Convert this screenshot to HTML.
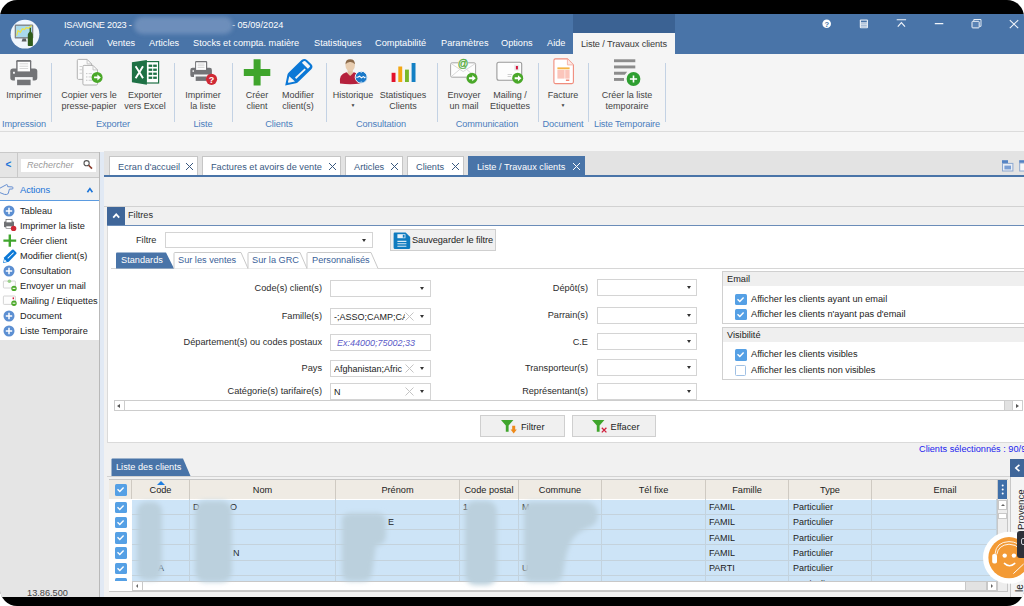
<!DOCTYPE html>
<html lang="fr">
<head>
<meta charset="utf-8">
<title>ISAVIGNE 2023 - Liste / Travaux clients</title>
<style>
html,body{margin:0;padding:0;background:#fff;}
body{width:1024px;height:606px;overflow:hidden;position:relative;font-family:"Liberation Sans",sans-serif;font-size:9.5px;color:#3a3a3a;line-height:11px;}
*{box-sizing:border-box;}
.abs{position:absolute;}
#frame{position:absolute;left:0;top:0;width:1024px;height:606px;background:#000;border-radius:17px;overflow:hidden;}
#app{position:absolute;left:0;top:14px;width:1024px;height:583px;background:#f1f1f1;overflow:hidden;}
/* header */
#hdr{position:absolute;left:0;top:0;width:1024px;height:40px;background:#4974a8;}
#hdr .t{position:absolute;color:#fff;white-space:nowrap;}
#title{left:64px;top:6px;font-size:9.2px;}
.menu{top:24px;font-size:9.2px;}
#acttabtop{position:absolute;left:573px;top:0;width:102px;height:19px;background:#3b6293;}
#acttab{position:absolute;left:573px;top:19px;width:102px;height:21px;background:#f5f5f5;color:#3a3a3a;text-align:center;padding-top:6px;letter-spacing:-0.1px;font-size:9.2px;}
/* ribbon */
#ribbon{position:absolute;left:0;top:40px;width:1024px;height:78px;background:#f5f5f5;border-bottom:1px solid #dcdcdc;}
.rb{position:absolute;text-align:center;white-space:nowrap;color:#444;transform:translateX(-50%);line-height:11px;top:35.5px;font-size:9px;}
.gl{position:absolute;top:65px;letter-spacing:-0.1px;color:#4a7dbd;white-space:nowrap;transform:translateX(-50%);font-size:9.2px;}
.sep{position:absolute;top:9px;width:1px;height:59px;background:#c3d2e4;}
.ico{position:absolute;}
/* below ribbon */
#gap{position:absolute;left:0;top:118px;width:1024px;height:20px;background:#f6f6f6;}

/* sidebar */
#side{position:absolute;left:0;top:138px;width:100px;height:445px;background:#e5e5e5;border-right:1px solid #b9b9b9;}
#srow{position:absolute;left:0;top:0;width:99px;height:26px;border-top:1px solid #c9c9c9;border-bottom:1px solid #c9c9c9;background:#e5e5e5;}
#sback{position:absolute;left:0;top:0;width:18px;height:24px;border-right:1px solid #c9c9c9;color:#1a73d8;font-weight:bold;font-size:10px;text-align:center;padding-top:6px;}
#sbox{position:absolute;left:21px;top:6px;width:75px;height:13px;background:#fff;color:#9a9a9a;font-style:italic;font-size:9px;padding:1px 0 0 6px;}
#sact{position:absolute;left:0;top:26px;width:99px;height:23px;background:#f0f0f0;border-bottom:1px solid #5b9be0;color:#1a73d8;}
#slist{position:absolute;left:0;top:49px;width:99px;height:139px;background:#fff;}
.si{position:absolute;left:20px;white-space:nowrap;color:#222;font-size:9.2px;}
#ver{position:absolute;left:-2px;top:436px;width:99px;text-align:center;color:#444;font-size:9.2px;}
#split{position:absolute;left:100px;top:138px;width:4px;height:445px;background:#e1e9f4;}
/* main */
#main{position:absolute;left:104px;top:137px;width:920px;height:446px;background:#f1f1f1;}
#tabs{position:absolute;left:0;top:0;width:920px;height:24px;background:#e3e3e3;}
#tabline{position:absolute;left:0;top:24px;width:920px;height:2px;background:#4974a8;}
.tab{position:absolute;top:5px;height:19px;background:#fff;border:1px solid #c6c6c6;border-bottom:none;color:#39587f;font-size:9.2px;padding:5px 0 0 8px;white-space:nowrap;}
.tab.on{background:#4974a8;border-color:#4974a8;color:#fff;}
.tab svg{position:absolute;right:3px;top:4.5px;}

/* target-coord layer */
#tc{position:absolute;left:0;top:-14px;width:1024px;height:606px;}
#tc div,#tc span,#tc svg{position:absolute;}
.ln{background:#d2d2d2;}
.lbl{white-space:nowrap;color:#2c2c2c;font-size:9.2px;text-align:right;}
.inp{background:#fff;border:1px solid #d4d4d4;height:17px;font-size:9px;color:#222;white-space:nowrap;overflow:hidden;padding:3px 0 0 3px;}
.arr{width:0;height:0;border-left:2.5px solid transparent;border-right:2.5px solid transparent;border-top:3px solid #333;}
.btn{background:#f0f0f0;border:1px solid #cfcfcf;font-size:9.2px;color:#222;white-space:nowrap;}
.gb{border:1px solid #d0d0d0;background:#fff;}
.gbh{background:#efefef;left:0;top:0;height:14px;width:400px;font-size:9.2px;color:#222;padding:2px 0 0 4px;}
.cb{width:11.5px;height:11.5px;background:#55a0e5;border-radius:1.5px;}
.cb0{width:11px;height:11px;background:#fff;border:1px solid #9fc0e4;border-radius:1.5px;}
.ct{font-size:9.2px;color:#222;white-space:nowrap;}
.th{top:480px;height:19px;background:#efebe4;border-right:1px solid #cfcac2;font-size:9.2px;color:#222;text-align:center;padding-top:5px;}
.row{left:109px;width:888px;height:15.3px;background:#cde4f7;border-bottom:1px solid #c4d2dc;}
.cell{font-size:9px;color:#222;white-space:nowrap;}
.vl{width:1px;background:#c3d3df;top:499px;height:83px;}
.blur{background:#b7ccd9;filter:blur(3px);border-radius:10px;}
</style>
</head>
<body>
<div id="frame">
<div id="app">

<!-- HEADER -->
<div id="hdr">
  <div id="acttabtop"></div>
  <div class="t" id="title"><span style="letter-spacing:-0.25px">ISAVIGNE 2023 - </span><span style="display:inline-block;width:98px"></span>- 05/09/2024</div>
  <div class="t menu" style="left:64px">Accueil</div>
  <div class="t menu" style="left:107px">Ventes</div>
  <div class="t menu" style="left:149px">Articles</div>
  <div class="t menu" style="left:193px">Stocks et compta. matière</div>
  <div class="t menu" style="left:314px">Statistiques</div>
  <div class="t menu" style="left:375px">Comptabilité</div>
  <div class="t menu" style="left:441px">Paramètres</div>
  <div class="t menu" style="left:501px">Options</div>
  <div class="t menu" style="left:547px">Aide</div>
  <div id="acttab">Liste / Travaux clients</div>
</div>

<!-- RIBBON -->
<div id="ribbon">
  <div class="rb" style="left:24px">Imprimer</div>
  <div class="rb" style="left:89px">Copier vers le<br>presse-papier</div>
  <div class="rb" style="left:145px">Exporter<br>vers Excel</div>
  <div class="rb" style="left:203px">Imprimer<br>la liste</div>
  <div class="rb" style="left:257px">Créer<br>client</div>
  <div class="rb" style="left:298px">Modifier<br>client(s)</div>
  <div class="rb" style="left:353px">Historique<br><span style="font-size:5px;position:relative;top:-2px">&#9660;</span></div>
  <div class="rb" style="left:403px">Statistiques<br>Clients</div>
  <div class="rb" style="left:464px">Envoyer<br>un mail</div>
  <div class="rb" style="left:510px">Mailing /<br>Etiquettes</div>
  <div class="rb" style="left:563px">Facture<br><span style="font-size:5px;position:relative;top:-2px">&#9660;</span></div>
  <div class="rb" style="left:627px">Créer la liste<br>temporaire</div>

  <div class="gl" style="left:24px">Impression</div>
  <div class="gl" style="left:113px">Exporter</div>
  <div class="gl" style="left:203px">Liste</div>
  <div class="gl" style="left:279px">Clients</div>
  <div class="gl" style="left:381px">Consultation</div>
  <div class="gl" style="left:487px">Communication</div>
  <div class="gl" style="left:563px">Document</div>
  <div class="gl" style="left:627px">Liste Temporaire</div>

  <div class="sep" style="left:51px"></div>
  <div class="sep" style="left:174px"></div>
  <div class="sep" style="left:232px"></div>
  <div class="sep" style="left:326px"></div>
  <div class="sep" style="left:437px"></div>
  <div class="sep" style="left:538px"></div>
  <div class="sep" style="left:588px"></div>
  <div class="sep" style="left:665px"></div>
</div>
<div id="gap"></div>

<!-- SIDEBAR -->
<div id="side">
  <div id="srow"><div id="sback">&lt;</div><div id="sbox">Rechercher</div></div>
  <div id="sact"><span class="abs" style="left:20px;top:6px;font-size:9.4px;letter-spacing:-0.1px">Actions</span></div>
  <div id="slist">
    <div class="si" style="top:5px">Tableau</div>
    <div class="si" style="top:20px">Imprimer la liste</div>
    <div class="si" style="top:35px">Créer client</div>
    <div class="si" style="top:50px">Modifier client(s)</div>
    <div class="si" style="top:65px">Consultation</div>
    <div class="si" style="top:80px">Envoyer un mail</div>
    <div class="si" style="top:95px">Mailing / Etiquettes</div>
    <div class="si" style="top:110px">Document</div>
    <div class="si" style="top:125px">Liste Temporaire</div>
  </div>
  <div id="ver">13.86.500</div>
</div>
<div id="split"></div>

<!-- MAIN -->
<div id="main">
  <div id="tabs">
    <div class="tab" style="left:5px;width:89px">Ecran d'accueil <svg width="9" height="9" viewBox="0 0 9 9"><path d="M1 1L8 8M8 1L1 8" stroke="#39587f" stroke-width="1" fill="none"/></svg></div>
    <div class="tab" style="left:98px;width:139px">Factures et avoirs de vente <svg width="9" height="9" viewBox="0 0 9 9"><path d="M1 1L8 8M8 1L1 8" stroke="#39587f" stroke-width="1" fill="none"/></svg></div>
    <div class="tab" style="left:241px;width:58px">Articles <svg width="9" height="9" viewBox="0 0 9 9"><path d="M1 1L8 8M8 1L1 8" stroke="#39587f" stroke-width="1" fill="none"/></svg></div>
    <div class="tab" style="left:303px;width:57px">Clients <svg width="9" height="9" viewBox="0 0 9 9"><path d="M1 1L8 8M8 1L1 8" stroke="#39587f" stroke-width="1" fill="none"/></svg></div>
    <div class="tab on" style="left:364px;width:117px">Liste / Travaux clients <svg width="9" height="9" viewBox="0 0 9 9"><path d="M1 1L8 8M8 1L1 8" stroke="#fff" stroke-width="1" fill="none"/></svg></div>
  </div>
  <div id="tabline"></div>
</div>
<div id="tc">
<!--LOGO-->
<svg width="32" height="32" viewBox="9 18 32 32" style="left:9px;top:18px">
<circle cx="25" cy="34.2" r="14.4" fill="#f0f6fd"/>
<rect x="14.7" y="24.6" width="18.6" height="14" rx="1.2" fill="#80858a"/>
<rect x="16" y="25.9" width="16" height="11.2" fill="#a9d9ec"/>
<path d="M16.6 35.6L18 30.6L20.4 32.4L22.4 28.8L24.6 29.6L26.2 27.6L28.4 28.2L31.6 25.6" stroke="#ebe24a" stroke-width="1.3" fill="none"/>
<path d="M22.6 38.6H25.8L26.6 41.6H21.6Z" fill="#5c5f62"/>
<path d="M29.6 27.8H31V31.6Q32.9 33.4 32.9 36V45.2Q32.9 46 32.1 46H28.6Q27.8 46 27.8 45.2V36Q27.8 33.4 29.6 31.6Z" fill="#2f5c1c"/>
</svg>
<!--/LOGO-->
<!--WINCTL-->
<svg width="214" height="26" viewBox="810 14 214 26" style="left:810px;top:14px">
<circle cx="826.7" cy="23.8" r="4.3" fill="#fff"/><text x="826.7" y="26.6" font-size="7.6" font-weight="bold" fill="#4974a8" text-anchor="middle" font-family="Liberation Sans, sans-serif">?</text>
<rect x="859.8" y="19.4" width="8.2" height="8.9" rx="1" fill="#e4ebf4"/><rect x="861" y="20.6" width="5.8" height="1.7" fill="#4974a8"/><path d="M861 23.8H866.8M861 25.4H866.8M861 27H866.8" stroke="#8fa9c9" stroke-width="0.8"/>
<path d="M896.7 19.8H906.1" stroke="#f0f4fa" stroke-width="1.1"/><path d="M897.8 26.6L901.4 22.6L905 26.6" stroke="#f0f4fa" stroke-width="1.2" fill="none"/>
<path d="M934.8 23.6H943.3" stroke="#f0f4fa" stroke-width="1.2"/>
<path d="M973.8 21.2V19.5H981V26.3H979.4" stroke="#e4ebf4" stroke-width="1" fill="none"/><rect x="972" y="21.3" width="7.2" height="6.6" rx="0.8" stroke="#f0f4fa" stroke-width="1" fill="#5a83b5"/>
<path d="M1009.8 20.1L1018.2 28.1M1018.2 20.1L1009.8 28.1" stroke="#f0f4fa" stroke-width="1.1"/>
</svg>
<div style="left:134px;top:17px;width:99px;height:17px;background:#7292bd;filter:blur(2px);border-radius:9px;opacity:.9"></div>
<!--/WINCTL-->
<!--SIDEICONS-->
<svg width="99" height="200" viewBox="0 150 99 200" style="left:0;top:150px">
<path d="M-0.5 188.4L6.4 184.7Q7.3 184.3 7.5 185.3L7.7 186.7L12.1 186.9Q13.1 187.1 13.1 188Q13.1 188.9 12.1 189L9.4 189.1L8.4 193Q8 194.4 6.4 194.5L4.4 194.4L-0.5 192.4" stroke="#5f8ad0" stroke-width="0.95" fill="none" stroke-linejoin="round"/>
<path d="M87.4 192.2L89.9 188.6L92.4 192.2" stroke="#1a73d8" stroke-width="1.6" fill="none"/>
<circle cx="86.6" cy="163.2" r="2.6" stroke="#555" stroke-width="1.1" fill="#fff"/><path d="M88.6 165.2L92 168.6" stroke="#8a3a2a" stroke-width="1.6"/>
<circle cx="9" cy="211" r="5.5" fill="#5c8fd2"/><path d="M9 207.8V214.2M5.8 211H12.2" stroke="#fff" stroke-width="1.5"/>
<rect x="4" y="221.6" width="10" height="5.6" rx="0.8" fill="#6f7073"/><rect x="6" y="219.4" width="6" height="3.4" fill="#fff" stroke="#6f7073" stroke-width="0.8"/><rect x="6" y="226" width="6" height="2.6" fill="#fff" stroke="#6f7073" stroke-width="0.6"/><circle cx="13.6" cy="228.4" r="2.7" fill="#cf2a36"/>
<path d="M8.6 234.4H11V239.4H16.2V241.8H11V246.8H8.6V241.8H3.4V239.4H8.6Z" fill="#3fa52c"/>
<g transform="translate(3 249.4) scale(0.5)"><path d="M0.3 27L2.6 15.6L18.2 0.9Q19.8 -0.4 21.4 0.9L26.4 5.9Q27.8 7.5 26.4 9.1L11.6 24.6Z" fill="#0b78d6"/><path d="M8.8 17.4L20.6 5.8L21.8 7L10 18.6Z" fill="#fff"/><path d="M2.9 19.6L7.6 24.2L1.9 25.6Z" fill="#fff"/></g>
<circle cx="9" cy="271" r="5.5" fill="#5c8fd2"/><path d="M9 267.8V274.2M5.8 271H12.2" stroke="#fff" stroke-width="1.5"/>
<rect x="3.4" y="281" width="12" height="7" rx="0.8" fill="#fdfdfd" stroke="#c9c9c9" stroke-width="0.8"/><circle cx="9.4" cy="281.2" r="1.8" fill="#9ad08a"/><circle cx="14" cy="288.4" r="2.7" fill="#4aa829"/><rect x="12.6" y="287.8" width="2.8" height="1.2" fill="#e8f5e2"/>
<rect x="3.4" y="296" width="12" height="8.4" rx="0.8" fill="#fdfdfd" stroke="#c9c9c9" stroke-width="0.8"/><rect x="12.6" y="297.4" width="1.4" height="1.8" fill="#d4143c"/><circle cx="14" cy="303.2" r="2.7" fill="#4aa829"/><rect x="12.6" y="302.6" width="2.8" height="1.2" fill="#e8f5e2"/>
<circle cx="9" cy="316" r="5.5" fill="#5c8fd2"/><path d="M9 312.8V319.2M5.8 316H12.2" stroke="#fff" stroke-width="1.5"/>
<circle cx="9" cy="331" r="5.5" fill="#5c8fd2"/><path d="M9 327.8V334.2M5.8 331H12.2" stroke="#fff" stroke-width="1.5"/>
</svg>
<!--/SIDEICONS-->
<!--RIBICONS-->
<svg width="700" height="40" viewBox="0 54 700 40" style="left:0;top:54px"><rect x="10.3" y="68.6" width="27.0" height="11.8" rx="2.7" fill="#737477"/><rect x="16.2" y="60.0" width="15.1" height="11.3" rx="1.2" fill="#737477"/><rect x="17.6" y="61.8" width="12.4" height="9.6" fill="#fdfdfd"/><rect x="19.5" y="63.5" width="8.6" height="0.7" fill="#c8c8c8"/><rect x="19.5" y="65.8" width="8.6" height="0.7" fill="#c8c8c8"/><rect x="19.5" y="68.1" width="8.6" height="0.7" fill="#c8c8c8"/><rect x="14.9" y="77.1" width="17.8" height="8.1" fill="#f5f6f7"/><rect x="17.1" y="79.7" width="13.5" height="5.5" fill="#737477"/><rect x="13.0" y="71.8" width="1.9" height="1.9" fill="#f5f6f7"/><path d="M78.5 59.4H87.1L91.6 63.9V78.2Q91.6 79.4 90.39999999999999 79.4H78.5Q77.3 79.4 77.3 78.2V60.6Q77.3 59.4 78.5 59.4Z" fill="#fbfbfb" stroke="#a9a9a9" stroke-width="0.9"/><path d="M87.1 59.4V63.9H91.6" fill="none" stroke="#bdbdbd" stroke-width="0.8"/><rect x="79.5" y="66.0" width="2.5" height="0.8" fill="#c5c5c5"/><rect x="79.5" y="69.4" width="2.5" height="0.8" fill="#c5c5c5"/><rect x="79.5" y="72.8" width="2.5" height="0.8" fill="#c5c5c5"/><path d="M84.10000000000001 65.4H93.0L97.5 69.9V83.8Q97.5 85.0 96.3 85.0H84.10000000000001Q82.9 85.0 82.9 83.8V66.60000000000001Q82.9 65.4 84.10000000000001 65.4Z" fill="#fbfbfb" stroke="#a9a9a9" stroke-width="0.9"/><path d="M93.0 65.4V69.9H97.5" fill="none" stroke="#bdbdbd" stroke-width="0.8"/><rect x="86" y="73.2" width="1.4" height="0.9" fill="#bdbdbd"/><rect x="88.6" y="73.2" width="3.5" height="0.9" fill="#c9c9c9"/><rect x="86" y="76.5" width="1.4" height="0.9" fill="#bdbdbd"/><rect x="88.6" y="76.5" width="3.5" height="0.9" fill="#c9c9c9"/><rect x="86" y="79.8" width="1.4" height="0.9" fill="#bdbdbd"/><rect x="88.6" y="79.8" width="3.5" height="0.9" fill="#c9c9c9"/><circle cx="97.1" cy="77.4" r="5.5" fill="#4aa829"/><path d="M94.07 76.47H97.38V74.38L100.84 77.4L97.38 80.43V78.34H94.07Z" fill="#fff"/><rect x="145" y="61.6" width="13.6" height="21.4" fill="#fff" stroke="#1e7145" stroke-width="1.2"/><rect x="148.6" y="64.6" width="3.6" height="2.3" fill="#1e7145"/><rect x="153.2" y="64.6" width="3.6" height="2.3" fill="#1e7145"/><rect x="148.6" y="68.6" width="3.6" height="2.3" fill="#1e7145"/><rect x="153.2" y="68.6" width="3.6" height="2.3" fill="#1e7145"/><rect x="148.6" y="72.6" width="3.6" height="2.3" fill="#1e7145"/><rect x="153.2" y="72.6" width="3.6" height="2.3" fill="#1e7145"/><rect x="148.6" y="76.6" width="3.6" height="2.3" fill="#1e7145"/><rect x="153.2" y="76.6" width="3.6" height="2.3" fill="#1e7145"/><path d="M131.9 62.3L146.9 60V84.7L131.9 82.3Z" fill="#1e7145"/><path d="M135.6 66.3L139.4 72.3L135.6 78.3M143 66.3L139.4 72.3L143 78.3" stroke="#fff" stroke-width="1.9" fill="none"/><rect x="190.3" y="67.7" width="21.6" height="9.4" rx="2.2" fill="#737477"/><rect x="195.1" y="60.9" width="12.1" height="9.0" rx="1.2" fill="#737477"/><rect x="196.1" y="62.3" width="9.9" height="7.6" fill="#fdfdfd"/><rect x="197.6" y="63.7" width="6.9" height="0.7" fill="#c8c8c8"/><rect x="197.6" y="65.5" width="6.9" height="0.7" fill="#c8c8c8"/><rect x="197.6" y="67.3" width="6.9" height="0.7" fill="#c8c8c8"/><rect x="194.0" y="74.5" width="14.3" height="6.4" fill="#f5f6f7"/><rect x="195.7" y="76.5" width="10.8" height="4.4" fill="#737477"/><rect x="192.5" y="70.3" width="1.5" height="1.5" fill="#f5f6f7"/><circle cx="211.5" cy="79.3" r="5.6" fill="#cf2a36"/><text x="211.5" y="82.6" font-size="9" font-weight="bold" fill="#fff" text-anchor="middle" font-family="Liberation Sans, sans-serif">?</text><path d="M253.6 59.3H260.6V68.9H270.3V75.9H260.6V85.5H253.6V75.9H243.8V68.9H253.6Z" fill="#3fa52c"/><path d="M285.2 85.6L287.5 74.6Q287.8 73.4 288.8 72.4L301.6 60.1Q304.4 57.8 307.2 60.2L311.4 64.2Q313.6 66.6 311.3 69.2L298.4 81.8Q297.4 82.8 296 83.3Z" fill="#0b78d6"/><path d="M301.9 62.8L303.6 61.2Q304.5 60.6 305.3 61.3L309.7 65.4Q310.4 66.2 309.7 67L307.9 68.7Z" fill="#f5f5f5"/><path d="M295 77.6L304.6 68.6L305.8 69.8L296.2 79Z" fill="#f5f5f5"/><path d="M289.3 76.3L295 81.5L288.9 82.7Q287.8 82.8 288 81.7Z" fill="#f5f5f5"/><path d="M340 83.4Q338.6 74 346.4 72.2L350.2 74.6L354 72.2Q361.8 74 360.4 83.4Q350.2 85 340 83.4Z" fill="#b5213d"/><path d="M347.6 70H352.8V73.5L350.2 76L347.6 73.5Z" fill="#e3c4a4"/><ellipse cx="350.2" cy="65.6" rx="4.7" ry="5.6" fill="#e8cdb0"/><path d="M345.5 64.5Q345.3 59.3 350.2 59.3Q355.1 59.3 354.9 64.5Q353.5 61.8 350.2 62Q346.9 61.8 345.5 64.5Z" fill="#8a6a4a"/><circle cx="361.2" cy="77.2" r="6" fill="#1a79c9" stroke="#f5f6f7" stroke-width="1"/><path d="M357.2 77.6L359.6 76.2L361.4 77.8L363.4 76.6L365.2 78" stroke="#fff" stroke-width="1.1" fill="none"/><path d="M361.2 71.8V73M361.2 81.4V82.6M355.8 77.2H357M365.4 77.2H366.6" stroke="#fff" stroke-width="0.8"/><rect x="391.6" y="72.8" width="3.9" height="9.2" fill="#e3122c"/><rect x="398.3" y="66.5" width="3.9" height="15.5" fill="#f3a712"/><rect x="405" y="69.6" width="3.9" height="12.4" fill="#78b82a"/><rect x="411.6" y="63" width="3.9" height="19" fill="#1380c4"/><rect x="450.6" y="62.8" width="25" height="14.4" rx="1.6" fill="#fdfdfd" stroke="#a6a6a6" stroke-width="1"/><path d="M451.2 63.6L463.2 71.6L475.2 63.6M451.2 76.6L459.8 69.4M475.2 76.6L466.6 69.4" stroke="#cfcfcf" stroke-width="0.8" fill="none"/><circle cx="463.2" cy="63.9" r="5.2" fill="#f5f5f5"/><text x="463.2" y="67" font-size="10.5" fill="#55ad3e" stroke="#55ad3e" stroke-width="0.35" text-anchor="middle" font-family="Liberation Sans, sans-serif">@</text><circle cx="472" cy="78.2" r="5.5" fill="#4aa829"/><path d="M468.98 77.27H472.27V75.17L475.74 78.2L472.27 81.23V79.14H468.98Z" fill="#fff"/><rect x="496.9" y="62.3" width="24.8" height="18" rx="2" fill="#fdfdfd" stroke="#9a9a9a" stroke-width="1.1"/><rect x="514.2" y="64.6" width="5.2" height="6" fill="#e9e9e9"/><rect x="515.9" y="66" width="2" height="3.4" fill="#d4143c"/><rect x="507.6" y="74" width="4.4" height="0.8" fill="#c4c4c4"/><rect x="507.6" y="76" width="3.4" height="0.8" fill="#c4c4c4"/><circle cx="517.7" cy="78.2" r="5.5" fill="#4aa829"/><path d="M514.68 77.27H517.98V75.17L521.44 78.2L517.98 81.23V79.14H514.68Z" fill="#fff"/><path d="M555.4 58.9H567.4L573.4 64.9V82Q573.4 83.6 571.8 83.6H555.4Q553.9 83.6 553.9 82V60.4Q553.9 58.9 555.4 58.9Z" fill="#fff" stroke="#f08c7c" stroke-width="1.1"/><path d="M567.4 58.9V64.9H573.4" fill="#fde9e5" stroke="#f4a89c" stroke-width="0.8"/><rect x="557.4" y="67.4" width="12.2" height="1.9" fill="#f6b445"/><rect x="557.4" y="70" width="7.2" height="8.6" fill="#fbc5bb"/><rect x="565.2" y="70" width="4.4" height="8.6" fill="#fbc5bb"/><rect x="565.9" y="79.6" width="3.4" height="1.2" fill="#ee6a55"/><rect x="614" y="59.3" width="21.3" height="2.9" fill="#8c8c8c"/><rect x="614" y="65.5" width="21.3" height="2.9" fill="#8c8c8c"/><path d="M614 71.8H627.2L624.8 74.7H614Z" fill="#8c8c8c"/><rect x="614" y="78" width="10" height="2.9" fill="#8c8c8c"/><circle cx="633.5" cy="79" r="6.9" fill="#2e9f31"/><path d="M633.5 75.4V82.6M629.9 79H637.1" stroke="#fff" stroke-width="1.6"/></svg>
<!--/RIBICONS-->
<div class="ln" style="left:104px;top:206px;width:920px;height:1px"></div>
<div style="left:107px;top:207px;width:917px;height:18px;background:#f0f0f0"></div>
<div style="left:107px;top:207px;width:18px;height:18px;background:#3f6699"><svg width="18" height="18" viewBox="0 0 18 18" style="left:0;top:0"><path d="M6.2 10.6L9.2 7.4L12.2 10.6" stroke="#fff" stroke-width="1.8" fill="none"/></svg></div>
<div class="lbl" style="left:128px;top:210px;text-align:left">Filtres</div>
<div style="left:107px;top:225px;width:917px;height:1px;background:#6a8cb8"></div>
<div style="left:107px;top:226px;width:930px;height:217px;background:#fff;border:1px solid #dadada;border-top:none"></div>
<div class="lbl" style="left:136px;top:235px;text-align:left">Filtre</div>
<div class="inp" style="left:165px;top:232px;width:208px;height:16px"></div><div class="arr" style="left:362px;top:239px"></div>
<div class="btn" style="left:389.5px;top:229px;width:106.5px;height:21.5px"><svg width="18" height="18" viewBox="0 0 18 18" style="left:2px;top:1.5px"><path d="M1.6 0.6H12.6L17.2 5V15.8Q17.2 16.9 16.1 16.9H1.6Q0.6 16.9 0.6 15.8V1.7Q0.6 0.6 1.6 0.6Z" fill="#0f7bbf"/><rect x="4.4" y="2.2" width="8" height="4" fill="#e9f3fa"/><rect x="9.8" y="2.8" width="1.8" height="2.8" fill="#0f7bbf"/><path d="M4.4 9.4H13.4M4.4 11.8H13.4M4.4 14.2H13.4" stroke="#d7eaf6" stroke-width="1.1"/></svg><span style="left:21.5px;top:5px;letter-spacing:-0.05px">Sauvegarder le filtre</span></div>
<div style="left:111px;top:268px;width:913px;height:1px;background:#d6d6d6"></div>
<svg width="270" height="17" viewBox="0 0 270 17" style="left:116px;top:252px"><path d="M0 16.5V1.5Q0 0.5 1 0.5H50L58 16.5Z" fill="#4974a8"/><path d="M58 16.5V1.5Q58 0.5 59 0.5H125L132 16.5" fill="#fff" stroke="#c9c9c9"/><path d="M132 16.5V1.5Q132 0.5 133 0.5H184L191 16.5" fill="#fff" stroke="#c9c9c9"/><path d="M191 16.5V1.5Q191 0.5 192 0.5H255L262 16.5" fill="#fff" stroke="#c9c9c9"/></svg>
<div class="lbl" style="left:121px;top:255px;color:#fff">Standards</div>
<div class="lbl" style="left:178px;top:255px;color:#3b5f99">Sur les ventes</div>
<div class="lbl" style="left:252px;top:255px;color:#3b5f99">Sur la GRC</div>
<div class="lbl" style="left:312px;top:255px;color:#3b5f99">Personnalisés</div>
<div class="lbl" style="left:122px;width:200px;top:282.5px">Code(s) client(s)</div>
<div class="inp" style="left:330px;top:279.5px;width:101px"><span style="left:3px;top:3px;width:71px;overflow:hidden"></span></div>
<div class="arr" style="left:420px;top:286.5px"></div>
<div class="lbl" style="left:122px;width:200px;top:310.5px">Famille(s)</div>
<div class="inp" style="left:330px;top:307.5px;width:101px"><span style="left:3px;top:3px;width:71px;overflow:hidden">-;ASSO;CAMP;CA</span></div>
<div class="arr" style="left:420px;top:314.5px"></div>
<svg width="9" height="9" viewBox="0 0 9 9" style="left:405px;top:311.5px"><path d="M0.5 0.5L8.5 8.5M8.5 0.5L0.5 8.5" stroke="#c4c4c4" stroke-width="1" fill="none"/></svg>
<div class="lbl" style="left:122px;width:200px;top:336.5px">Département(s) ou codes postaux</div>
<div class="inp" style="left:330px;top:333.5px;width:101px;color:#5a5ac8;font-style:italic;padding-left:6px">Ex:44000;75002;33</div>
<div class="lbl" style="left:122px;width:200px;top:362.5px">Pays</div>
<div class="inp" style="left:330px;top:359.5px;width:101px"><span style="left:3px;top:3px;width:71px;overflow:hidden">Afghanistan;Afric</span></div>
<div class="arr" style="left:420px;top:366.5px"></div>
<svg width="9" height="9" viewBox="0 0 9 9" style="left:405px;top:363.5px"><path d="M0.5 0.5L8.5 8.5M8.5 0.5L0.5 8.5" stroke="#c4c4c4" stroke-width="1" fill="none"/></svg>
<div class="lbl" style="left:122px;width:200px;top:386.0px">Catégorie(s) tarifaire(s)</div>
<div class="inp" style="left:330px;top:383.0px;width:101px"><span style="left:3px;top:3px;width:71px;overflow:hidden">N</span></div>
<div class="arr" style="left:420px;top:390.0px"></div>
<svg width="9" height="9" viewBox="0 0 9 9" style="left:405px;top:387.0px"><path d="M0.5 0.5L8.5 8.5M8.5 0.5L0.5 8.5" stroke="#c4c4c4" stroke-width="1" fill="none"/></svg>
<div class="lbl" style="left:388px;width:200px;top:282.8px">Dépôt(s)</div>
<div class="inp" style="left:597px;top:279.0px;width:100px"></div><div class="arr" style="left:687px;top:286.0px"></div>
<div class="lbl" style="left:388px;width:200px;top:310.3px">Parrain(s)</div>
<div class="inp" style="left:597px;top:306.5px;width:100px"></div><div class="arr" style="left:687px;top:313.5px"></div>
<div class="lbl" style="left:388px;width:200px;top:336.8px">C.E</div>
<div class="inp" style="left:597px;top:333.0px;width:100px"></div><div class="arr" style="left:687px;top:340.0px"></div>
<div class="lbl" style="left:388px;width:200px;top:362.8px">Transporteur(s)</div>
<div class="inp" style="left:597px;top:359.0px;width:100px"></div><div class="arr" style="left:687px;top:366.0px"></div>
<div class="lbl" style="left:388px;width:200px;top:386.3px">Représentant(s)</div>
<div class="inp" style="left:597px;top:382.5px;width:100px"></div><div class="arr" style="left:687px;top:389.5px"></div>
<div class="gb" style="left:722px;top:271px;width:310px;height:53px"><div class="gbh">Email</div></div>
<div class="cb" style="left:735px;top:293.5px"><svg width="11" height="11" viewBox="0 0 11 11" style="left:0;top:0"><path d="M2.5 5.2L4.8 7.4L8.6 3.4" stroke="#fff" stroke-width="1.4" fill="none"/></svg></div>
<div class="ct" style="left:751px;top:293.5px">Afficher les clients ayant un email</div>
<div class="cb" style="left:735px;top:308.5px"><svg width="11" height="11" viewBox="0 0 11 11" style="left:0;top:0"><path d="M2.5 5.2L4.8 7.4L8.6 3.4" stroke="#fff" stroke-width="1.4" fill="none"/></svg></div>
<div class="ct" style="left:751px;top:308.5px">Afficher les clients n'ayant pas d'email</div>
<div class="gb" style="left:722px;top:327px;width:310px;height:53px"><div class="gbh">Visibilité</div></div>
<div class="cb" style="left:735px;top:349px"><svg width="11" height="11" viewBox="0 0 11 11" style="left:0;top:0"><path d="M2.5 5.2L4.8 7.4L8.6 3.4" stroke="#fff" stroke-width="1.4" fill="none"/></svg></div>
<div class="ct" style="left:751px;top:349px">Afficher les clients visibles</div>
<div class="cb0" style="left:735px;top:364.5px"></div>
<div class="ct" style="left:751px;top:364.5px">Afficher les clients non visibles</div>
<div style="left:114px;top:400px;width:908px;height:11px;background:#e2e2e2;border:1px solid #cdcdcd"></div>
<div style="left:114px;top:400px;width:10.5px;height:11px;background:#fff;border:1px solid #cdcdcd"></div><div style="left:117px;top:403.5px;width:0;height:0;border-top:2px solid transparent;border-bottom:2px solid transparent;border-right:3px solid #555"></div>
<div style="left:124px;top:400px;width:881px;height:11px;background:#fff;border:1px solid #cdcdcd"></div>
<div style="left:1012px;top:400px;width:10.5px;height:11px;background:#fff;border:1px solid #cdcdcd"></div><div style="left:1016px;top:403.5px;width:0;height:0;border-top:2px solid transparent;border-bottom:2px solid transparent;border-left:3px solid #555"></div>
<div class="btn" style="left:480px;top:415px;width:85px;height:22px"><svg width="20" height="16" viewBox="0 0 20 16" style="left:20px;top:3.8px"><path d="M0 0H12.4L7.6 5.6V11.8H4.8V5.6Z" fill="#3fa52c"/><path d="M11.2 5.8H14.2V9.6H15.8L12.7 13.4L9.6 9.6H11.2Z" fill="#ee8a1a"/></svg><span style="left:40px;top:5.5px">Filtrer</span></div>
<div class="btn" style="left:572px;top:415px;width:84px;height:22px"><svg width="20" height="16" viewBox="0 0 20 16" style="left:18.6px;top:3.8px"><path d="M0 0H12.4L7.6 5.6V11.8H4.8V5.6Z" fill="#3fa52c"/><path d="M9.8 7.8L14.4 12.4M14.4 7.8L9.8 12.4" stroke="#d01f3c" stroke-width="1.3"/></svg><span style="left:37.5px;top:5.5px">Effacer</span></div>
<div class="ct" style="left:919px;top:444px;color:#2222ee">Clients sélectionnés : 90/9</div>
<svg width="90" height="18" viewBox="0 0 90 18" style="left:111px;top:458px"><path d="M0.5 18V1.5Q0.5 0.5 1.5 0.5H72L79.5 18Z" fill="#4974a8"/></svg>
<div class="lbl" style="left:116px;top:462px;color:#fff">Liste des clients</div>
<div class="ln" style="left:107px;top:476px;width:903px;height:1px"></div>
<div style="left:108.5px;top:479px;width:899px;height:113px;background:#fff;border:1px solid #c6c6c6"></div>
<div class="th" style="left:109px;width:23px"></div>
<div class="th" style="left:132px;width:58px">Code</div>
<div class="th" style="left:190px;width:146px">Nom</div>
<div class="th" style="left:336px;width:124px">Prénom</div>
<div class="th" style="left:460px;width:59px">Code postal</div>
<div class="th" style="left:519px;width:83px">Commune</div>
<div class="th" style="left:602px;width:104px">Tél fixe</div>
<div class="th" style="left:706px;width:83px">Famille</div>
<div class="th" style="left:789px;width:83px">Type</div>
<div class="th" style="left:872px;width:146px;border-right:none">Email</div>
<div class="cb" style="left:115px;top:484px"><svg width="11" height="11" viewBox="0 0 11 11" style="left:0;top:0"><path d="M2.5 5.2L4.8 7.4L8.6 3.4" stroke="#fff" stroke-width="1.4" fill="none"/></svg></div>
<div style="left:156.5px;top:481px;width:0;height:0;border-left:4px solid transparent;border-right:4px solid transparent;border-bottom:4px solid #1f7ee0"></div>
<div style="left:109px;top:499px;width:889px;height:83px;overflow:hidden">
<div class="row" style="left:0;top:0.5px"></div>
<div class="cb" style="left:6px;top:2.5px"><svg width="11" height="11" viewBox="0 0 11 11" style="left:0;top:0"><path d="M2.5 5.2L4.8 7.4L8.6 3.4" stroke="#fff" stroke-width="1.4" fill="none"/></svg></div>
<div class="cell" style="left:600px;top:3.0px">FAMIL</div>
<div class="cell" style="left:684px;top:3.0px">Particulier</div>
<div class="row" style="left:0;top:15.799999999999955px"></div>
<div class="cb" style="left:6px;top:17.799999999999955px"><svg width="11" height="11" viewBox="0 0 11 11" style="left:0;top:0"><path d="M2.5 5.2L4.8 7.4L8.6 3.4" stroke="#fff" stroke-width="1.4" fill="none"/></svg></div>
<div class="cell" style="left:600px;top:18.299999999999955px">FAMIL</div>
<div class="cell" style="left:684px;top:18.299999999999955px">Particulier</div>
<div class="row" style="left:0;top:31.100000000000023px"></div>
<div class="cb" style="left:6px;top:33.10000000000002px"><svg width="11" height="11" viewBox="0 0 11 11" style="left:0;top:0"><path d="M2.5 5.2L4.8 7.4L8.6 3.4" stroke="#fff" stroke-width="1.4" fill="none"/></svg></div>
<div class="cell" style="left:600px;top:33.60000000000002px">FAMIL</div>
<div class="cell" style="left:684px;top:33.60000000000002px">Particulier</div>
<div class="row" style="left:0;top:46.39999999999998px"></div>
<div class="cb" style="left:6px;top:48.39999999999998px"><svg width="11" height="11" viewBox="0 0 11 11" style="left:0;top:0"><path d="M2.5 5.2L4.8 7.4L8.6 3.4" stroke="#fff" stroke-width="1.4" fill="none"/></svg></div>
<div class="cell" style="left:600px;top:48.89999999999998px">FAMIL</div>
<div class="cell" style="left:684px;top:48.89999999999998px">Particulier</div>
<div class="row" style="left:0;top:61.700000000000045px"></div>
<div class="cb" style="left:6px;top:63.700000000000045px"><svg width="11" height="11" viewBox="0 0 11 11" style="left:0;top:0"><path d="M2.5 5.2L4.8 7.4L8.6 3.4" stroke="#fff" stroke-width="1.4" fill="none"/></svg></div>
<div class="cell" style="left:600px;top:64.20000000000005px">PARTI</div>
<div class="cell" style="left:684px;top:64.20000000000005px">Particulier</div>
<div class="row" style="left:0;top:77.0px"></div>
<div class="cb" style="left:6px;top:79.0px"><svg width="11" height="11" viewBox="0 0 11 11" style="left:0;top:0"><path d="M2.5 5.2L4.8 7.4L8.6 3.4" stroke="#fff" stroke-width="1.4" fill="none"/></svg></div>
<div class="cell" style="left:600px;top:79.5px">FAMIL</div>
<div class="cell" style="left:684px;top:79.5px">Particulier</div>
<div style="left:0;top:0;width:23px;height:83px;background:#fff;z-index:0"></div>
<div class="cb" style="left:6px;top:2.5px"><svg width="11" height="11" viewBox="0 0 11 11" style="left:0;top:0"><path d="M2.5 5.2L4.8 7.4L8.6 3.4" stroke="#fff" stroke-width="1.4" fill="none"/></svg></div>
<div class="cb" style="left:6px;top:17.799999999999955px"><svg width="11" height="11" viewBox="0 0 11 11" style="left:0;top:0"><path d="M2.5 5.2L4.8 7.4L8.6 3.4" stroke="#fff" stroke-width="1.4" fill="none"/></svg></div>
<div class="cb" style="left:6px;top:33.10000000000002px"><svg width="11" height="11" viewBox="0 0 11 11" style="left:0;top:0"><path d="M2.5 5.2L4.8 7.4L8.6 3.4" stroke="#fff" stroke-width="1.4" fill="none"/></svg></div>
<div class="cb" style="left:6px;top:48.39999999999998px"><svg width="11" height="11" viewBox="0 0 11 11" style="left:0;top:0"><path d="M2.5 5.2L4.8 7.4L8.6 3.4" stroke="#fff" stroke-width="1.4" fill="none"/></svg></div>
<div class="cb" style="left:6px;top:63.700000000000045px"><svg width="11" height="11" viewBox="0 0 11 11" style="left:0;top:0"><path d="M2.5 5.2L4.8 7.4L8.6 3.4" stroke="#fff" stroke-width="1.4" fill="none"/></svg></div>
<div class="cb" style="left:6px;top:79.0px"><svg width="11" height="11" viewBox="0 0 11 11" style="left:0;top:0"><path d="M2.5 5.2L4.8 7.4L8.6 3.4" stroke="#fff" stroke-width="1.4" fill="none"/></svg></div>
</div>
<div class="vl" style="left:189px"></div>
<div class="vl" style="left:335px"></div>
<div class="vl" style="left:459px"></div>
<div class="vl" style="left:518px"></div>
<div class="vl" style="left:601px"></div>
<div class="vl" style="left:705px"></div>
<div class="vl" style="left:788px"></div>
<div class="vl" style="left:871px"></div>
<div class="vl" style="left:996px"></div>
<div style="left:109px;top:581px;width:898px;height:10px;background:#fff"></div>
<div style="left:132px;top:581px;width:866px;height:10px;background:#fff;border:1px solid #c8c8c8"></div>
<div style="left:132px;top:581px;width:11px;height:10px;background:#fff;border:1px solid #c8c8c8"></div><div style="left:136px;top:584px;width:0;height:0;border-top:2px solid transparent;border-bottom:2px solid transparent;border-right:2.5px solid #666"></div>
<div style="left:965px;top:581px;width:22px;height:10px;background:#e2e2e2;border:1px solid #c8c8c8"></div>
<div style="left:986.5px;top:581px;width:10.5px;height:10px;background:#fff;border:1px solid #c8c8c8"></div><div style="left:990.5px;top:584px;width:0;height:0;border-top:2px solid transparent;border-bottom:2px solid transparent;border-left:2.5px solid #666"></div>
<div style="left:997px;top:480px;width:10px;height:111px;background:#ededed;border-left:1px solid #c8c8c8"></div>
<div style="left:997.5px;top:479.5px;width:9.5px;height:19.5px;background:#3f6fa8"><svg width="10" height="20" viewBox="0 0 10 20" style="left:0;top:0"><circle cx="4.7" cy="5.6" r="1" fill="#fff"/><circle cx="4.7" cy="9.6" r="1" fill="#fff"/><circle cx="4.7" cy="13.6" r="1" fill="#fff"/></svg></div>
<div style="left:998px;top:500px;width:9px;height:10px;background:#fff;border:1px solid #c8c8c8"></div><div style="left:1000.5px;top:503.5px;width:0;height:0;border-left:2px solid transparent;border-right:2px solid transparent;border-bottom:2.5px solid #666"></div>
<div style="left:998px;top:512.5px;width:9px;height:6.5px;background:#fff;border:1px solid #c8c8c8"></div>
<!--TABICONS-->
<svg width="24" height="14" viewBox="1000 159 24 14" style="left:1000px;top:159px">
<rect x="1002" y="160.2" width="6" height="3.4" fill="#5483c4"/>
<rect x="1002.5" y="163.4" width="10.4" height="7.6" fill="#e9eef6" stroke="#8ea9d0" stroke-width="1"/>
<rect x="1004.4" y="165.6" width="6.6" height="3.8" fill="#7b9fd4"/>
<rect x="1019.2" y="160.2" width="6" height="3.2" fill="#5483c4"/>
<rect x="1019.7" y="163" width="8" height="8" fill="#f6f8fb" stroke="#8ea9d0" stroke-width="1"/>
</svg>
<!--/TABICONS-->
<!--BLUR-->
<div class="cell" style="left:193px;top:502px">D</div><div class="cell" style="left:230px;top:502px">O</div>
<div class="cell" style="left:233px;top:548px">N</div>
<div class="cell" style="left:158px;top:563px">A</div>
<div class="cell" style="left:388px;top:517px">E</div>
<div class="cell" style="left:463px;top:502px">1</div>
<div class="cell" style="left:522px;top:502px">M</div>
<div class="cell" style="left:522px;top:563px">U</div>
<svg width="900" height="100" viewBox="108 494 900 100" style="left:108px;top:494px">
<defs><filter id="bl" x="-20%" y="-20%" width="140%" height="140%"><feGaussianBlur stdDeviation="2.6"/></filter></defs>
<g filter="url(#bl)" fill="#bbd0dd">
<rect x="137" y="502" width="25" height="78" rx="9"/>
<rect x="195" y="501" width="37" height="81" rx="10"/>
<path d="M342 520Q342 513 352 513H376Q386 513 386 522V536Q386 544 376 546L372 574Q371 581 362 581H350Q342 581 342 572Z"/>
<rect x="465" y="501" width="32" height="84" rx="10"/>
<path d="M524 508Q524 502 532 502H588Q597 504 598 514Q598 524 590 527Q578 531 572 540Q566 550 563 574Q562 582 552 582H532Q524 582 524 574Z"/>
</g>
</svg>
<!--/BLUR-->
<div style="left:1010px;top:477px;width:14px;height:120px;background:#f4f4f4;border-left:1px solid #c8c8c8"></div>
<div style="left:1010px;top:459px;width:14px;height:18px;background:#3f6699"><svg width="14" height="18" viewBox="0 0 14 18" style="left:0;top:0"><path d="M9.4 5.8L5.8 9L9.4 12.2" stroke="#fff" stroke-width="1.6" fill="none"/></svg></div>
<div class="ct" style="left:1014.5px;top:538px;width:60px;transform:rotate(-90deg);transform-origin:left top;color:#222;font-size:9.6px">u Provence</div>
<div class="ct" style="left:1014px;top:592px;transform:rotate(-90deg);transform-origin:left top;color:#222;font-size:10px">le</div>
<svg width="56" height="56" viewBox="981 530 56 56" style="left:981px;top:530px">
<circle cx="1009" cy="557.8" r="26" fill="#fff"/>
<circle cx="1009" cy="557.7" r="20.6" fill="#f39a35"/>
<circle cx="1004.7" cy="555.6" r="2.2" fill="#fff"/><circle cx="1013.9" cy="555.6" r="2.2" fill="#fff"/>
<path d="M1004.4 563.4Q1009.5 568 1014.8 563.4" stroke="#fff" stroke-width="1.5" fill="none" stroke-linecap="round"/>
<rect x="992.2" y="554" width="4.8" height="9.6" rx="1.8" fill="#fff"/>
<path d="M995 554Q996 542 1009 541.6Q1019 541.8 1022 549" stroke="#fff" stroke-width="0.9" fill="none"/>
<path d="M996.8 554.4Q998.4 545 1009 544.2Q1016 544.4 1019.4 548.6" stroke="#fff" stroke-width="0.9" fill="none"/>
<path d="M1023.6 564L1013.4 573.6" stroke="#fff" stroke-width="1" fill="none"/>
</svg>
<div style="left:1017px;top:531px;width:10px;height:27px;background:#2e3039;border-radius:3px 0 0 3px"><div style="left:3.5px;top:7px;width:6px;height:7px;border:1px solid #cfd3da;border-radius:2px"></div></div>
</div>


</div>
</div>
</body>
</html>
